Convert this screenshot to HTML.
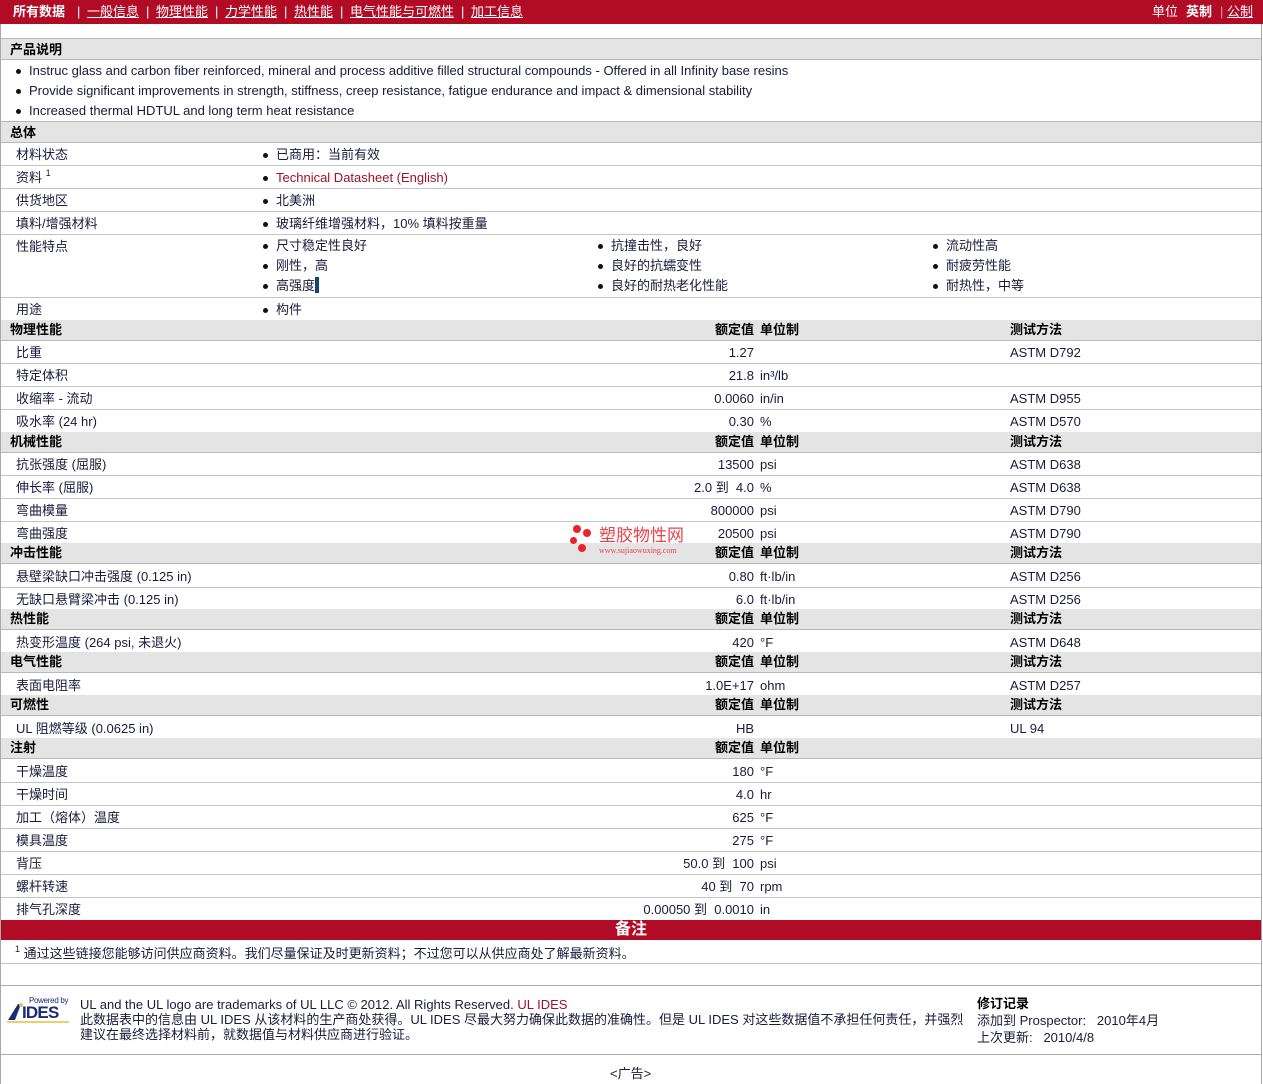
<!DOCTYPE html>
<html><head><meta charset="utf-8"><style>
*{margin:0;padding:0;box-sizing:border-box}
body{width:1263px;height:1084px;position:relative;background:#fff;font-family:"Liberation Sans","Noto Sans CJK SC",sans-serif;font-size:13px;color:#1a1a3a;overflow:hidden}
.bar{position:absolute;left:0;top:0;width:1263px;height:24px;background:#b10b26;color:#fff}
.bar span,.bar a{position:absolute;top:4px;color:#fff;white-space:nowrap;font-size:13px;line-height:16px}
.bar a{text-decoration:underline}
.r{position:absolute;left:1px;width:1260px;height:23px;border-bottom:1px solid #c4c4c4;background:#fff}
.h{position:absolute;left:1px;width:1260px;height:21px;border-bottom:1px solid #b8b8b8;background:#e4e4e4;font-weight:bold;color:#000}
.t{position:absolute;top:1px;white-space:nowrap;line-height:22px}
.h .t{line-height:20px;top:0}
.v{right:507px;text-align:right}
.u{left:759px}
.m{left:1009px}
.l{left:15px}
.hl{left:9px}
.b{position:absolute;white-space:nowrap;line-height:20px}
.b:before{content:"";position:absolute;left:-13px;top:8px;width:5px;height:5px;border-radius:50%;background:#111}
.vl{position:absolute;top:24px;bottom:0;width:1px;background:#aaa}
sup{font-size:9px;line-height:0;position:relative;top:-6px;vertical-align:baseline}
</style></head><body>
<div class="bar">
<span style="left:13px;font-weight:bold">所有数据</span>
<span style="left:77px">|</span><a style="left:87px">一般信息</a>
<span style="left:146px">|</span><a style="left:156px">物理性能</a>
<span style="left:215px">|</span><a style="left:225px">力学性能</a>
<span style="left:284px">|</span><a style="left:294px">热性能</a>
<span style="left:340px">|</span><a style="left:350px">电气性能与可燃性</a>
<span style="left:461px">|</span><a style="left:471px">加工信息</a>
<span style="left:1152px">单位</span><span style="left:1186px;font-weight:bold">英制</span>
<span style="left:1220px;color:#d9a">|</span><a style="left:1227px">公制</a>
</div>
<div class="vl" style="left:0"></div><div class="vl" style="left:1261px"></div>

<div class="h" style="top:38px;border-top:1px solid #b8b8b8;height:22px"><span class="t hl" style="top:1px">产品说明</span></div>
<div class="b" style="left:29px;top:61px">Instruc glass and carbon fiber reinforced, mineral and process additive filled structural compounds - Offered in all Infinity base resins</div>
<div class="b" style="left:29px;top:81px">Provide significant improvements in strength, stiffness, creep resistance, fatigue endurance and impact &amp; dimensional stability</div>
<div class="b" style="left:29px;top:101px">Increased thermal HDTUL and long term heat resistance</div>

<div class="h" style="top:121px;border-top:1px solid #b8b8b8;height:22px"><span class="t hl" style="top:1px">总体</span></div>
<div class="r" style="top:143px"><span class="t l">材料状态</span><span class="b" style="left:275px;top:2px">已商用：当前有效</span></div>
<div class="r" style="top:166px"><span class="t l">资料 <sup>1</sup></span><span class="b" style="left:275px;top:2px;color:#a0102a">Technical Datasheet (English)</span></div>
<div class="r" style="top:189px"><span class="t l">供货地区</span><span class="b" style="left:275px;top:2px">北美洲</span></div>
<div class="r" style="top:212px"><span class="t l">填料/增强材料</span><span class="b" style="left:275px;top:2px">玻璃纤维增强材料，10% 填料按重量</span></div>
<div class="r" style="top:235px;height:63px"><span class="t l">性能特点</span>
<span class="b" style="left:275px;top:1px">尺寸稳定性良好</span><span class="b" style="left:275px;top:21px">刚性，高</span><span class="b" style="left:275px;top:41px">高强度<span style="display:inline-block;width:4px;height:16px;background:#0b4a6e;vertical-align:-3px"></span></span>
<span class="b" style="left:610px;top:1px">抗撞击性，良好</span><span class="b" style="left:610px;top:21px">良好的抗蠕变性</span><span class="b" style="left:610px;top:41px">良好的耐热老化性能</span>
<span class="b" style="left:945px;top:1px">流动性高</span><span class="b" style="left:945px;top:21px">耐疲劳性能</span><span class="b" style="left:945px;top:41px">耐热性，中等</span></div>
<div class="r" style="top:298px"><span class="t l">用途</span><span class="b" style="left:275px;top:2px">构件</span></div>

<div class="h" style="top:320px"><span class="t hl">物理性能</span><span class="t v">额定值</span><span class="t u">单位制</span><span class="t m">测试方法</span></div>
<div class="r" style="top:341px"><span class="t l">比重</span><span class="t v">1.27</span><span class="t m">ASTM D792</span></div>
<div class="r" style="top:364px"><span class="t l">特定体积</span><span class="t v">21.8</span><span class="t u">in³/lb</span></div>
<div class="r" style="top:387px"><span class="t l">收缩率 - 流动</span><span class="t v">0.0060</span><span class="t u">in/in</span><span class="t m">ASTM D955</span></div>
<div class="r" style="top:410px"><span class="t l">吸水率 (24 hr)</span><span class="t v">0.30</span><span class="t u">%</span><span class="t m">ASTM D570</span></div>

<div class="h" style="top:432px"><span class="t hl">机械性能</span><span class="t v">额定值</span><span class="t u">单位制</span><span class="t m">测试方法</span></div>
<div class="r" style="top:453px"><span class="t l">抗张强度 (屈服)</span><span class="t v">13500</span><span class="t u">psi</span><span class="t m">ASTM D638</span></div>
<div class="r" style="top:476px"><span class="t l">伸长率 (屈服)</span><span class="t v">2.0 到 &nbsp;4.0</span><span class="t u">%</span><span class="t m">ASTM D638</span></div>
<div class="r" style="top:499px"><span class="t l">弯曲模量</span><span class="t v">800000</span><span class="t u">psi</span><span class="t m">ASTM D790</span></div>
<div class="r" style="top:522px"><span class="t l">弯曲强度</span><span class="t v">20500</span><span class="t u">psi</span><span class="t m">ASTM D790</span></div>

<div class="h" style="top:543px"><span class="t hl">冲击性能</span><span class="t v">额定值</span><span class="t u">单位制</span><span class="t m">测试方法</span></div>
<div class="r" style="top:565px"><span class="t l">悬壁梁缺口冲击强度 (0.125 in)</span><span class="t v">0.80</span><span class="t u">ft·lb/in</span><span class="t m">ASTM D256</span></div>
<div class="r" style="top:588px"><span class="t l">无缺口悬臂梁冲击 (0.125 in)</span><span class="t v">6.0</span><span class="t u">ft·lb/in</span><span class="t m">ASTM D256</span></div>

<div class="h" style="top:609px"><span class="t hl">热性能</span><span class="t v">额定值</span><span class="t u">单位制</span><span class="t m">测试方法</span></div>
<div class="r" style="top:631px"><span class="t l">热变形温度 (264 psi, 未退火)</span><span class="t v">420</span><span class="t u">°F</span><span class="t m">ASTM D648</span></div>
<div class="h" style="top:652px"><span class="t hl">电气性能</span><span class="t v">额定值</span><span class="t u">单位制</span><span class="t m">测试方法</span></div>
<div class="r" style="top:674px"><span class="t l">表面电阻率</span><span class="t v">1.0E+17</span><span class="t u">ohm</span><span class="t m">ASTM D257</span></div>
<div class="h" style="top:695px"><span class="t hl">可燃性</span><span class="t v">额定值</span><span class="t u">单位制</span><span class="t m">测试方法</span></div>
<div class="r" style="top:717px"><span class="t l">UL 阻燃等级 (0.0625 in)</span><span class="t v">HB</span><span class="t m">UL 94</span></div>
<div class="h" style="top:738px"><span class="t hl">注射</span><span class="t v">额定值</span><span class="t u">单位制</span></div>
<div class="r" style="top:760px"><span class="t l">干燥温度</span><span class="t v">180</span><span class="t u">°F</span></div>
<div class="r" style="top:783px"><span class="t l">干燥时间</span><span class="t v">4.0</span><span class="t u">hr</span></div>
<div class="r" style="top:806px"><span class="t l">加工（熔体）温度</span><span class="t v">625</span><span class="t u">°F</span></div>
<div class="r" style="top:829px"><span class="t l">模具温度</span><span class="t v">275</span><span class="t u">°F</span></div>
<div class="r" style="top:852px"><span class="t l">背压</span><span class="t v">50.0 到 &nbsp;100</span><span class="t u">psi</span></div>
<div class="r" style="top:875px"><span class="t l">螺杆转速</span><span class="t v">40 到 &nbsp;70</span><span class="t u">rpm</span></div>
<div class="r" style="top:898px;border-bottom:none;height:22px"><span class="t l">排气孔深度</span><span class="t v">0.00050 到 &nbsp;0.0010</span><span class="t u">in</span></div>

<div style="position:absolute;left:1px;top:920px;width:1260px;height:20px;background:#b10b26;color:#fff;font-weight:bold;font-size:16px;text-align:center;line-height:20px">备注</div>
<div class="r" style="top:941px"><span class="t" style="left:14px;top:2px"><sup>1</sup> 通过这些链接您能够访问供应商资料。我们尽量保证及时更新资料；不过您可以从供应商处了解最新资料。</span></div>
<div class="r" style="top:964px;height:22px;border-bottom:1px solid #aaa"></div>

<div style="position:absolute;left:7px;top:996px;width:64px;height:28px">
<div style="position:absolute;left:22px;top:0;font-size:8px;color:#1a2a7a;line-height:9px;white-space:nowrap;letter-spacing:-0.3px">Powered by</div>
<svg style="position:absolute;left:0;top:6px" width="16" height="20"><polygon points="1,18 11,2 14,2 8,18" fill="#1a2a7a"/><circle cx="14" cy="3" r="2" fill="#e8c54a"/></svg>
<div style="position:absolute;left:15px;top:8px;font-weight:bold;font-size:17px;color:#1a2a7a;line-height:17px;letter-spacing:-0.8px">IDES</div>
<div style="position:absolute;left:0;top:25px;width:62px;height:2px;background:#e8d06a"></div>
</div>
<div style="position:absolute;left:80px;top:997px;line-height:15px;white-space:nowrap">UL and the UL logo are trademarks of UL LLC © 2012. All Rights Reserved. <span style="color:#a0102a">UL IDES</span><br>此数据表中的信息由 UL IDES 从该材料的生产商处获得。UL IDES 尽最大努力确保此数据的准确性。但是 UL IDES 对这些数据值不承担任何责任，并强烈<br>建议在最终选择材料前，就数据值与材料供应商进行验证。</div>
<div style="position:absolute;left:977px;top:995px;line-height:17px;white-space:nowrap"><b style="color:#000">修订记录</b><br>添加到 Prospector: &nbsp; 2010年4月<br>上次更新: &nbsp; 2010/4/8</div>
<div style="position:absolute;left:1px;top:1054px;width:1260px;border-top:1px solid #aaa"></div>
<div style="position:absolute;left:610px;top:1066px;line-height:16px">&lt;广告&gt;</div>

<div style="position:absolute;left:568px;top:524px;width:130px;height:34px">
<div style="position:absolute;left:5px;top:1px;width:8px;height:8px;border-radius:50%;background:#e8242a"></div>
<div style="position:absolute;left:15px;top:5px;width:8px;height:8px;border-radius:50%;background:#e8242a"></div>
<div style="position:absolute;left:2px;top:13px;width:7px;height:7px;border-radius:50%;background:#e8242a"></div>
<div style="position:absolute;left:10px;top:20px;width:8px;height:8px;border-radius:50%;background:#e8242a"></div>
<div style="position:absolute;left:31px;top:3px;font-size:17px;color:#e8444a;line-height:18px;white-space:nowrap">塑胶物性网</div>
<div style="position:absolute;left:31px;top:22px;font-size:8px;color:#e8444a;font-family:'Liberation Serif',serif;white-space:nowrap">www.sujiaowuxing.com</div>
</div>
</body></html>
